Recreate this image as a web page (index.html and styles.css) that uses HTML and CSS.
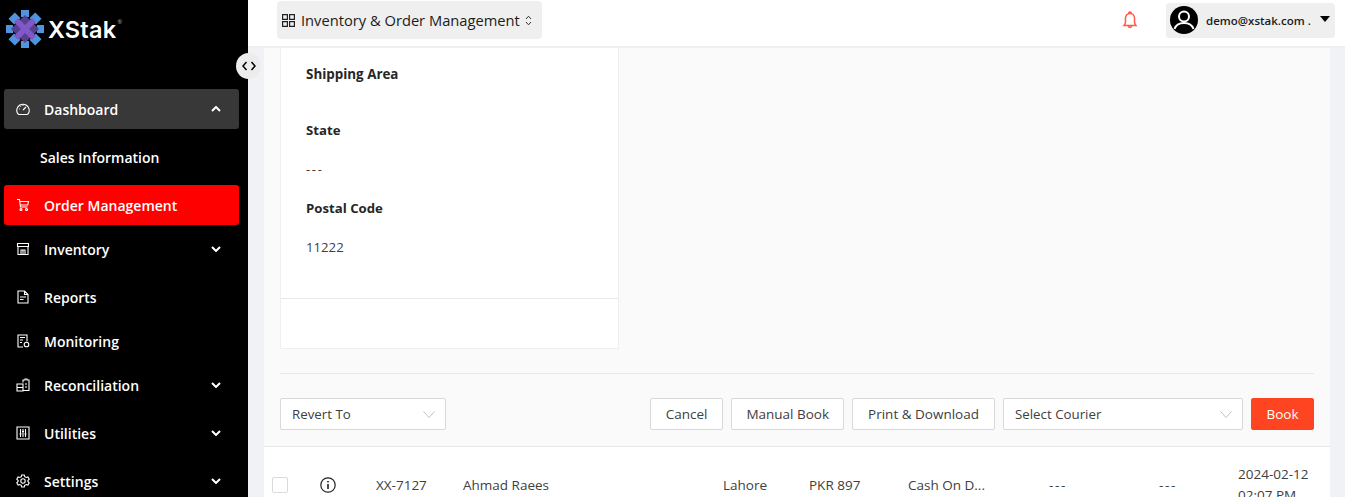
FILE: index.html
```html
<!DOCTYPE html>
<html lang="en">
<head>
<meta charset="utf-8">
<title>XStak</title>
<link rel="stylesheet" href="styles.css">
</head>
<body>
<div class="app">
  <aside class="sidebar">
    <div class="brand">
      <svg class="brand-mark" viewBox="0 0 38 38" width="38" height="38">
        <g fill="#4f94dc">
          <rect x="15" y="0" width="8" height="7"/>
          <rect x="15" y="31" width="8" height="7"/>
          <rect x="0" y="15" width="7" height="8"/>
          <rect x="31" y="15" width="7" height="8"/>
          <rect x="4" y="4.500" width="9" height="8" transform="rotate(-45 8.500 8.500)"/>
          <rect x="25" y="4.500" width="9" height="8" transform="rotate(45 29.500 8.500)"/>
          <rect x="4" y="25.500" width="9" height="8" transform="rotate(45 8.500 29.500)"/>
          <rect x="25" y="25.500" width="9" height="8" transform="rotate(-45 29.500 29.500)"/>
        </g>
        <path fill="#57418f" d="M19 5l7 7 7 7-7 7-7 7-7-7-7-7 7-7z"/>
        <path fill="#8058c8" d="M12 8l7 7 7-7 4 4-7 7 7 7-4 4-7-7-7 7-4-4 7-7-7-7z"/>
      </svg>
      <span class="brand-name">XStak</span><span class="brand-reg">®</span>
    </div>
    <nav class="nav">
      <a class="nav-item nav-open">
        <svg class="nav-icon" viewBox="0 0 14 14"><path d="M3 12.500h8a2 2 0 0 0 1.500-1.200A6.200 6.200 0 1 0 1.500 11.300 2 2 0 0 0 3 12.500z"/><path d="M7 8l3-3M3 7h.8M4.500 4.200l.5.500M7 3v.8"/></svg>
        <span class="nav-label">Dashboard</span>
        <svg class="nav-caret" viewBox="0 0 10 6"><path d="M1 5l4-4 4 4"/></svg>
      </a>
      <a class="nav-sub">Sales Information</a>
      <a class="nav-item nav-active">
        <svg class="nav-icon" viewBox="0 0 14 14"><path d="M1 1.500h2.500l1 7.500h7M4 3.500h8.500l-.8 3.500H4.500"/><circle cx="5" cy="11.500" r="1"/><circle cx="10.500" cy="11.500" r="1"/></svg>
        <span class="nav-label">Order Management</span>
      </a>
      <a class="nav-item">
        <svg class="nav-icon" viewBox="0 0 14 14"><path d="M1.500 1.500h11v3h-11zM2 4.500v8h10v-8M5 12.500V8h4v4.500M7 8v4.500"/></svg>
        <span class="nav-label">Inventory</span>
        <svg class="nav-caret" viewBox="0 0 10 6"><path d="M1 1l4 4 4-4"/></svg>
      </a>
      <a class="nav-item nav-tight">
        <svg class="nav-icon" viewBox="0 0 14 14"><path d="M2 1h6.500L12 4.500V13H2zM8.500 1v3.500H12M4 7h6M4 9.500h3.500"/></svg>
        <span class="nav-label">Reports</span>
      </a>
      <a class="nav-item nav-tight">
        <svg class="nav-icon" viewBox="0 0 14 14"><path d="M7 13H2V1h9v6.500M4 3.500h5M4 6h3M4 8.500h2"/><circle cx="10.500" cy="10.500" r="2.300"/></svg>
        <span class="nav-label">Monitoring</span>
      </a>
      <a class="nav-item">
        <svg class="nav-icon" viewBox="0 0 14 14"><path d="M1 6h6v7H1zM1 9.500h6M7 4.500V2h2V1h2v1h2v10.500H7M9 6h2M9 9h2"/></svg>
        <span class="nav-label">Reconciliation</span>
        <svg class="nav-caret" viewBox="0 0 10 6"><path d="M1 1l4 4 4-4"/></svg>
      </a>
      <a class="nav-item">
        <svg class="nav-icon" viewBox="0 0 14 14"><path d="M1 1h12v12H1zM4.500 3v8M7 3v8M9.500 3v8M3.500 8h2M6 5.500h2M8.500 8h2"/></svg>
        <span class="nav-label">Utilities</span>
        <svg class="nav-caret" viewBox="0 0 10 6"><path d="M1 1l4 4 4-4"/></svg>
      </a>
      <a class="nav-item">
        <svg class="nav-icon" viewBox="0 0 14 14"><path d="M5.700 1h2.600l.4 1.700 1.500.8 1.700-.5 1.300 2.200-1.300 1.300v1l1.300 1.300-1.300 2.200-1.700-.5-1.500.8L8.300 13H5.700l-.4-1.700-1.500-.8-1.700.5L.8 8.800 2.100 7.500v-1L.8 5.200 2.100 3l1.700.5 1.500-.8z"/><circle cx="7" cy="7" r="2.200"/></svg>
        <span class="nav-label">Settings</span>
        <svg class="nav-caret" viewBox="0 0 10 6"><path d="M1 1l4 4 4-4"/></svg>
      </a>
    </nav>
    <button class="collapse" aria-label="Collapse">
      <svg viewBox="0 0 14 10" width="14" height="10"><path d="M4.500 1L1 5l3.500 4M9.500 1L13 5l-3.500 4"/></svg>
    </button>
  </aside>
  <div class="main">
    <header class="topbar">
      <div class="switcher">
        <svg class="grid-icon" viewBox="0 0 13 13" width="13" height="13"><path d="M.6.6h4.800v4.800H.6zM7.600.6h4.800v4.800H7.600zM.6 7.600h4.800v4.800H.6zM7.600 7.600h4.800v4.800H7.600z"/></svg>
        <span>Inventory &amp; Order Management</span>
        <svg class="updown" viewBox="0 0 7 11" width="7" height="11"><path d="M1 4l2.500-2.800L6 4M1 7l2.500 2.800L6 7"/></svg>
      </div>
      <div class="topbar-right">
        <svg class="bell" viewBox="0 0 16 20" width="16" height="20"><path d="M2 15.500c1-1.200 1.500-2 1.500-3.500V8a4.500 4.500 0 0 1 9 0v4c0 1.500.5 2.300 1.500 3.500zM6.500 3.500C6.800 1.500 9.200 1.500 9.500 3.500M6.500 15.500c0 2.600 3 2.600 3 0"/></svg>
        <div class="account">
          <svg class="avatar" viewBox="0 0 28 28" width="28" height="28"><circle cx="14" cy="14" r="14" fill="#000"/><circle cx="14" cy="10.500" r="5" fill="none" stroke="#fff" stroke-width="2"/><path d="M4.500 23c1.500-4.500 5-6 9.500-6s8 1.500 9.500 6" fill="none" stroke="#fff" stroke-width="2"/></svg>
          <span class="account-mail">demo@xstak.com .</span>
          <span class="account-caret"></span>
        </div>
      </div>
    </header>
    <main class="content">
      <section class="panel">
        <div class="card">
          <div class="card-body">
            <div class="field-label first">Shipping Area</div>
            <div class="field-label">State</div>
            <div class="field-value dashes">---</div>
            <div class="field-label">Postal Code</div>
            <div class="field-value">11222</div>
          </div>
          <div class="card-foot"></div>
        </div>
        <hr class="divider">
        <div class="actions">
          <div class="select select-revert">
            <span>Revert To</span>
            <svg class="chev" viewBox="0 0 12 7" width="12" height="7"><path d="M.5.500L6 6.500 11.500.500"/></svg>
          </div>
          <div class="actions-right">
            <button class="btn">Cancel</button>
            <button class="btn btn-manual">Manual Book</button>
            <button class="btn">Print &amp; Download</button>
            <div class="select select-courier">
              <span>Select Courier</span>
              <svg class="chev" viewBox="0 0 12 7" width="12" height="7"><path d="M.5.500L6 6.500 11.500.500"/></svg>
            </div>
            <button class="btn btn-primary">Book</button>
          </div>
        </div>
      </section>
      <section class="row">
        <span class="check"></span>
        <svg class="info" viewBox="0 0 16 16" width="16" height="16"><circle cx="8" cy="8" r="7.200"/><path class="info-i" d="M8 7v5M8 4v1.600"/></svg>
        <span>XX-7127</span>
        <span>Ahmad Raees</span>
        <span>Lahore</span>
        <span>PKR 897</span>
        <span>Cash On D...</span>
        <span class="dashes">---</span>
        <span class="dashes">---</span>
        <span class="date">2024-02-12<br>02:07 PM</span>
      </section>
    </main>
  </div>
</div>
</body>
</html>
```
FILE: styles.css
```css
* { box-sizing: border-box; }
html, body { margin: 0; height: 100%; overflow: hidden; }
body { font-family: "Open Sans", "Noto Sans", sans-serif; color: #262626; font-size: 13px; }
.app { display: flex; height: 497px; overflow: hidden; }

.sidebar { position: relative; flex: 0 0 248px; background: #000; color: #fff; }
.brand { display: flex; align-items: center; height: 89px; padding: 0 0 31px 6px; }
.brand-name { font-family: Inter, sans-serif; font-weight: 600; font-size: 23.500px; margin-left: 4px; letter-spacing: .2px; }
.brand-reg { font-size: 6px; color: #aaa; margin: -14px 0 0 1px; }
.nav { padding: 0 9px 0 4px; }
.nav-item { display: flex; align-items: center; height: 40px; margin-bottom: 8px; padding: 0 18px 0 12px; border-radius: 3px; font-weight: 600; font-size: 14px; color: #fff; }
.nav-tight { margin-bottom: 4px; }
.nav-open { background: #383838; }
.nav-active { background: #ff0000; margin-bottom: 4px; }
.nav-sub { display: flex; align-items: center; height: 40px; margin-bottom: 8px; padding-left: 36px; font-weight: 600; font-size: 14px; color: #fff; }
.nav-icon { flex: 0 0 14px; width: 14px; height: 14px; fill: none; stroke: #fff; stroke-width: 1.100; margin-right: 14px; }
.nav-label { flex: 1; }
.nav-caret { width: 10px; height: 6px; fill: none; stroke: #fff; stroke-width: 2; }
.collapse { position: absolute; top: 53px; left: 236px; width: 25px; height: 26px; padding: 0; border: 0; border-radius: 50%; background: #ececec; display: flex; align-items: center; justify-content: center; }
.collapse svg { fill: none; stroke: #000; stroke-width: 1.500; }

.main { flex: 1; min-width: 0; display: flex; flex-direction: column; background: #f0f2f5; }
.topbar { flex: 0 0 48px; display: flex; align-items: center; justify-content: space-between; background: #fff; border-bottom: 2px solid #f0f0f0; padding: 0 10px 6px 29px; }
.switcher { display: flex; align-items: center; height: 38px; padding: 0 10px 0 5px; border-radius: 4px; background: #efefef; font-size: 14.700px; color: #1c1c1c; }
.grid-icon { fill: none; stroke: #222; stroke-width: 1.200; margin-right: 6px; }
.updown { fill: none; stroke: #333; stroke-width: 1; margin-left: 5px; }
.topbar-right { display: flex; align-items: center; }
.bell { fill: none; stroke: #ff5a4a; stroke-width: 1.500; margin-right: 28px; }
.account { display: flex; align-items: center; width: 169px; height: 35px; padding: 0 4px; border-radius: 4px; background: #efefef; }
.avatar { flex: none; margin-right: 8px; }
.account-mail { font-size: 11.500px; font-weight: 600; color: #1c1c1c; white-space: nowrap; }
.account-caret { width: 0; height: 0; margin: -2px 0 0 9px; border-left: 5.500px solid transparent; border-right: 5.500px solid transparent; border-top: 6px solid #000; }

.content { flex: 1; min-height: 0; padding: 0 15px 0 16px; overflow: hidden; }
.panel { background: #fafafa; border-bottom: 1px solid #e8e8e8; padding: 0 16px; height: 399px; }
.card { width: 339px; background: #fff; border: 1px solid #efefef; border-top: 0; }
.card-body { height: 251px; padding: 16px 25px 0; border-bottom: 1px solid #e8e8e8; }
.card-foot { height: 49px; }
.field-label { font-weight: 700; font-size: 13.200px; line-height: 20px; margin-bottom: 19px; color: #262626; }
.field-label.first { margin-bottom: 36px; font-size: 13.400px; }
.field-value { font-size: 13.200px; line-height: 20px; margin-bottom: 19px; color: #404040; }
.divider { margin: 24px 0; border: 0; border-top: 1px solid #e8e8e8; }
.actions { display: flex; justify-content: space-between; }
.actions-right { display: flex; gap: 8px; }
.select { display: flex; align-items: center; justify-content: space-between; height: 32px; padding: 0 10px 0 11px; border: 1px solid #d9d9d9; border-radius: 2px; background: #fff; font-size: 13.300px; color: #404040; }
.select-revert { width: 166px; }
.select-courier { width: 240px; }
.chev { fill: none; stroke: #bfbfbf; stroke-width: 1; }
.btn { height: 32px; padding: 0 15px; border: 1px solid #d9d9d9; border-radius: 2px; background: #fff; font: inherit; font-size: 13.500px; color: #404040; }
.btn-manual { padding: 0 14px; }
.btn-primary { width: 63px; padding: 0; border-color: #ff4422; background: #ff4422; color: #fff; }

.row { display: grid; grid-template-columns: 48px 56px 87px 260px 86px 99px 141px 110px 79px 1fr; align-items: center; height: 76px; padding: 0 0 0 8px; background: #fff; font-size: 13.500px; color: #404040; }
.dashes { letter-spacing: 1.600px; }
.check { width: 16px; height: 16px; border: 1px solid #d9d9d9; border-radius: 2px; background: #fff; }
.info { fill: none; stroke: #222; stroke-width: 1.200; }
.info-i { stroke-width: 1.600; }
.date { line-height: 21px; white-space: nowrap; }
```
